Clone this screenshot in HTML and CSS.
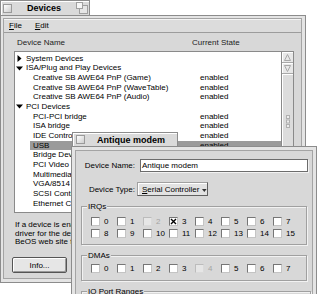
FILE: index.html
```html
<!doctype html>
<html lang="en">
  <head>
    <meta charset="UTF-8" />
    <meta name="viewport" content="width=device-width, initial-scale=1.0" />
    <title>Devices</title>
    <link rel="stylesheet" href="styles.css">
  </head>
  <body>
    <div class="desktop">
      <div class="window devices">
        <div class="tab">
          <span class="close-box"></span>
          <span class="tab-title">Devices</span>
          <svg class="zoom-box" width="12" height="12" viewBox="0 0 12 12">
            <rect x="3.5" y="3.5" width="8" height="8" fill="#e6e6e6" stroke="#a0a0a0" />
            <rect x="0.5" y="0.5" width="6" height="6" fill="#f6f6f6" stroke="#a0a0a0" />
          </svg>
        </div>
        <div class="frame">
          <div class="frame-inner">
            <div class="menubar">
              <span><u>F</u>ile</span>
              <span><u>E</u>dit</span>
            </div>
            <div class="columns">
              <span class="col-name">Device Name</span>
              <span>Current State</span>
            </div>
            <div class="scroll-view">
              <div class="list">
                <div class="row parent">
                  <svg class="twisty" width="7" height="7" viewBox="0 0 7 7"><polygon points="1.5,0 5.5,3.5 1.5,7" fill="#000" /></svg>
                  <span>System Devices</span>
                </div>
                <div class="row parent">
                  <svg class="twisty" width="7" height="7" viewBox="0 0 7 7"><polygon points="0,1.5 7,1.5 3.5,5.5" fill="#000" /></svg>
                  <span>ISA/Plug and Play Devices</span>
                </div>
                <div class="row child"><span class="name">Creative SB AWE64 PnP (Game)</span><span>enabled</span></div>
                <div class="row child"><span class="name">Creative SB AWE64 PnP (WaveTable)</span><span>enabled</span></div>
                <div class="row child"><span class="name">Creative SB AWE64 PnP (Audio)</span><span>enabled</span></div>
                <div class="row parent">
                  <svg class="twisty" width="7" height="7" viewBox="0 0 7 7"><polygon points="0,1.5 7,1.5 3.5,5.5" fill="#000" /></svg>
                  <span>PCI Devices</span>
                </div>
                <div class="row child"><span class="name">PCI-PCI bridge</span><span>enabled</span></div>
                <div class="row child"><span class="name">ISA bridge</span><span>enabled</span></div>
                <div class="row child"><span class="name">IDE Controller</span><span>enabled</span></div>
                <div class="row child selected"><span class="name">USB</span><span>enabled</span></div>
                <div class="row child"><span class="name">Bridge Device</span><span>enabled</span></div>
                <div class="row child"><span class="name">PCI Video Device</span><span>enabled</span></div>
                <div class="row child"><span class="name">Multimedia Device</span><span>enabled</span></div>
                <div class="row child"><span class="name">VGA/8514 Controller</span><span>enabled</span></div>
                <div class="row child"><span class="name">SCSI Controller</span><span>enabled</span></div>
                <div class="row child"><span class="name">Ethernet Controller</span><span>enabled</span></div>
              </div>
              <div class="vscroll">
                <div class="arrow">
                  <svg width="7" height="7" viewBox="0 0 7 7"><polygon points="3.5,0.5 6.5,6.5 0.5,6.5" fill="none" stroke="#a8a8a8" /></svg>
                </div>
                <div class="arrow">
                  <svg width="7" height="7" viewBox="0 0 7 7"><polygon points="0.5,0.5 6.5,0.5 3.5,6.5" fill="none" stroke="#a8a8a8" /></svg>
                </div>
                <div class="thumb">
                  <svg width="4" height="13" viewBox="0 0 4 13">
                    <rect x="0.5" y="0.5" width="3" height="3" fill="#eee" stroke="#b0b0b0" />
                    <rect x="0.5" y="5" width="3" height="3" fill="#eee" stroke="#b0b0b0" />
                    <rect x="0.5" y="9.5" width="3" height="3" fill="#eee" stroke="#b0b0b0" />
                  </svg>
                </div>
              </div>
            </div>
            <p class="note">
              <span>If a device is enabled but does not work, you may need a new</span>
              <span>driver for the device. Check the Be web site or the</span>
              <span>BeOS web site for updated drivers.</span>
            </p>
            <button class="btn">Info...</button>
          </div>
        </div>
      </div>

      <div class="window modem">
        <div class="tab">
          <span class="close-box"></span>
          <span class="tab-title">Antique modem</span>
        </div>
        <div class="frame">
          <div class="frame-inner">
            <div class="form">
              <label>Device Name:</label>
              <div class="text-field">Antique modem</div>
              <label>Device Type:</label>
              <div class="popup">
                <span><u>S</u>erial Controller</span>
                <svg class="popup-arrow" width="5" height="3" viewBox="0 0 5 3"><polygon points="0,0 5,0 2.5,3" fill="#333" /></svg>
              </div>
            </div>

            <div class="group irqs">
              <span class="group-label">IRQs</span>
              <div class="boxes">
                <span class="check"><span class="check-box"></span>0</span>
                <span class="check"><span class="check-box"></span>1</span>
                <span class="check off"><span class="check-box"></span>2</span>
                <span class="check"><span class="check-box"><svg width="7" height="7" viewBox="0 0 7 7"><path d="M1 1 L6 6 M6 1 L1 6" stroke="#000" stroke-width="1.4" /></svg></span>3</span>
                <span class="check"><span class="check-box"></span>4</span>
                <span class="check"><span class="check-box"></span>5</span>
                <span class="check"><span class="check-box"></span>6</span>
                <span class="check"><span class="check-box"></span>7</span>
                <span class="check"><span class="check-box"></span>8</span>
                <span class="check"><span class="check-box"></span>9</span>
                <span class="check"><span class="check-box"></span>10</span>
                <span class="check"><span class="check-box"></span>11</span>
                <span class="check"><span class="check-box"></span>12</span>
                <span class="check"><span class="check-box"></span>13</span>
                <span class="check"><span class="check-box"></span>14</span>
                <span class="check"><span class="check-box"></span>15</span>
              </div>
            </div>

            <div class="group dmas">
              <span class="group-label">DMAs</span>
              <div class="boxes">
                <span class="check"><span class="check-box"></span>0</span>
                <span class="check"><span class="check-box"></span>1</span>
                <span class="check"><span class="check-box"></span>2</span>
                <span class="check"><span class="check-box"></span>3</span>
                <span class="check off"><span class="check-box"></span>4</span>
                <span class="check"><span class="check-box"></span>5</span>
                <span class="check"><span class="check-box"></span>6</span>
                <span class="check"><span class="check-box"></span>7</span>
              </div>
            </div>

            <div class="group ports">
              <span class="group-label">IO Port Ranges</span>
            </div>
          </div>
        </div>
      </div>
    </div>
  </body>
</html>
```

FILE: styles.css
```css
* {
  box-sizing: border-box;
}
body {
  margin: 0;
  background-color: #fff;
  font-family: "Liberation Sans", Arial, sans-serif;
  font-size: 8px;
  color: #000;
}
.desktop {
  position: relative;
  width: 320px;
  height: 294px;
  overflow: hidden;
}
.window {
  position: absolute;
}
.devices {
  left: 0;
  top: 0;
  width: 306px;
}
.modem {
  left: 71px;
  top: 132px;
  width: 246px;
}

/* window tab */
.tab {
  display: flex;
  align-items: center;
  height: 15px;
  padding-left: 2px;
  background-color: #dadada;
  border: 1px solid #8c8c8c;
  border-bottom: none;
  box-shadow: inset 1px 1px 0 #fff;
}
.devices .tab {
  width: 90px;
}
.modem .tab {
  width: 106px;
  height: 14px;
  margin-left: 1px;
  padding-left: 3px;
}
.close-box {
  width: 9px;
  height: 9px;
  border: 1px solid #9a9a9a;
  background: linear-gradient(135deg, #fff, #cdcdcd);
}
.tab-title {
  margin-left: 15px;
  font-size: 9px;
  font-weight: bold;
}
.modem .tab-title {
  margin-left: 12px;
}
.zoom-box {
  margin-left: auto;
  margin-right: 1px;
}

/* window frame */
.frame {
  display: flex;
  border: 1px solid #8c8c8c;
  background-color: #e4e4e4;
  padding: 2px 3px 3px 2px;
}
.devices .frame {
  height: 268px;
}
.modem .frame {
  height: 200px;
  padding: 3px;
}
.frame-inner {
  flex: 1;
  border: 1px solid #a4a4a4;
  background-color: #d8d8d8;
}

/* Devices window */
.menubar {
  display: flex;
  align-items: center;
  gap: 13px;
  height: 14px;
  padding-left: 5px;
  background-color: #dcdcdc;
  border-bottom: 1px solid #9c9c9c;
  box-shadow: inset 0 1px 0 #f4f4f4;
}
.columns {
  display: flex;
  height: 10px;
  line-height: 10px;
  margin: 5px 0 3px 13px;
  color: #222;
}
.col-name {
  width: 175px;
}
.scroll-view {
  display: flex;
  width: 280px;
  height: 162px;
  margin-left: 10px;
  border: 1px solid #8a8a8a;
}
.list {
  flex: 1;
  padding-top: 1.5px;
  background-color: #fff;
  overflow: hidden;
}
.row {
  display: flex;
  align-items: center;
  height: 9.7px;
  line-height: 9.7px;
  white-space: nowrap;
}
.twisty {
  flex: none;
  margin: 0 3px 0 1px;
}
.child {
  margin-left: 15px;
}
.child .name {
  width: 170px;
  padding-left: 3px;
}
.selected {
  background-color: #9a9a9a;
}
.vscroll {
  display: flex;
  flex-direction: column;
  width: 12px;
  border-left: 1px solid #8a8a8a;
  background-color: #e2e2e2;
}
.arrow {
  display: flex;
  align-items: center;
  justify-content: center;
  height: 11px;
  background-color: #e8e8e8;
  border-bottom: 1px solid #a8a8a8;
  box-shadow: inset 1px 1px 0 #fff;
}
.thumb {
  display: flex;
  align-items: center;
  justify-content: center;
  height: 96px;
  background-color: #dcdcdc;
  border-bottom: 1px solid #9c9c9c;
  box-shadow: inset 1px 1px 0 #fff;
}
.note {
  margin: 8px 0 0 11px;
  line-height: 8.7px;
}
.note span {
  display: block;
  white-space: nowrap;
}
.btn {
  display: block;
  width: 55px;
  height: 16px;
  margin: 10px 0 0 8px;
  padding: 0;
  font-family: inherit;
  font-size: 8px;
  color: #000;
  background-color: #e6e6e6;
  border: 1px solid #555;
  border-radius: 2px;
  box-shadow: inset 1px 1px 0 #fff, inset -1px -1px 0 #9a9a9a;
}

/* Antique modem window */
.form {
  display: grid;
  grid-template-columns: 59px auto;
  column-gap: 2px;
  row-gap: 10px;
  align-items: center;
  padding-top: 8px;
}
.form label {
  text-align: right;
  white-space: nowrap;
}
.text-field {
  width: 168px;
  height: 13px;
  margin-left: 3px;
  padding-left: 1px;
  line-height: 11px;
  background-color: #fff;
  border: 1px solid #6c6c6c;
  box-shadow: 1px 1px 0 #f2f2f2;
}
.popup {
  display: flex;
  align-items: center;
  width: 71px;
  height: 14px;
  padding-left: 4px;
  background-color: #e2e2e2;
  border: 1px solid #a0a0a0;
  border-right-color: #606060;
  border-bottom-color: #606060;
  box-shadow: inset 1px 1px 0 #fff;
  white-space: nowrap;
}
.popup-arrow {
  margin-left: 3px;
  margin-top: 2px;
}
.group {
  position: relative;
  width: 226px;
  margin: 10px 0 0 5px;
  border: 1px solid #a0a0a0;
  box-shadow: inset 1px 1px 0 #f2f2f2, 1px 1px 0 #f2f2f2;
}
.irqs {
  height: 39px;
  padding: 10px 0 0 9px;
}
.dmas {
  height: 26px;
  padding: 8px 0 0 9px;
}
.ports {
  width: 230px;
  height: 30px;
}
.group-label {
  position: absolute;
  top: -5px;
  left: 5px;
  padding: 0 1px;
  line-height: 9px;
  background-color: #d8d8d8;
  white-space: nowrap;
}
.boxes {
  display: grid;
  grid-template-columns: repeat(8, 26px);
  row-gap: 3px;
}
.check {
  display: flex;
  align-items: center;
  gap: 4px;
  height: 9px;
  line-height: 9px;
}
.check-box {
  display: flex;
  align-items: center;
  justify-content: center;
  width: 9px;
  height: 9px;
  background-color: #fff;
  border: 1px solid;
  border-color: #767676 #c4c4c4 #c4c4c4 #767676;
}
.off {
  color: #a4a4a4;
}
.off .check-box {
  background-color: #e6e6e6;
  border-color: #bcbcbc #dadada #dadada #bcbcbc;
}
```
